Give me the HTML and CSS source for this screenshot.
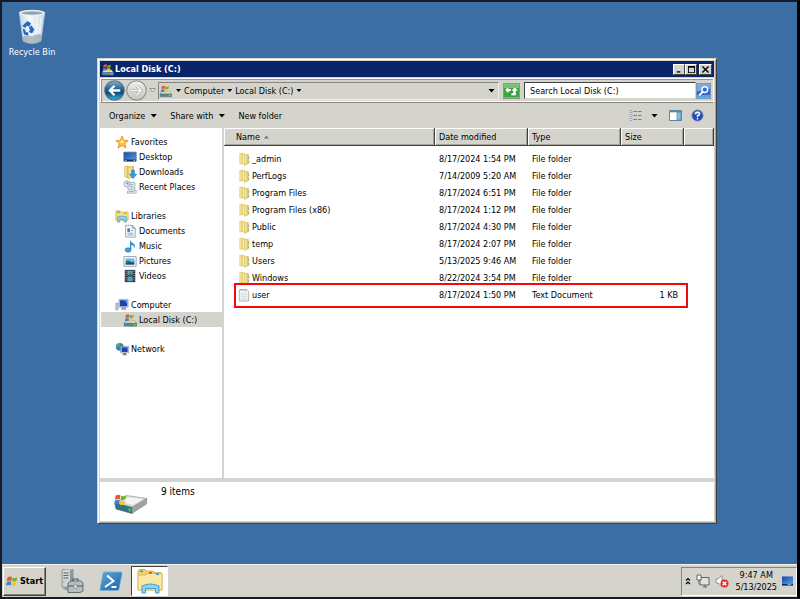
FILE: index.html
```html
<!DOCTYPE html>
<html lang="en">
<head>
<meta charset="utf-8">
<title>Local Disk (C:)</title>
<link rel="stylesheet" href="styles.css">
</head>
<body>
<svg class="sprite" aria-hidden="true">
  <defs>
    <linearGradient id="gold" x1="0" x2="1"><stop offset="0" stop-color="#fcf3b4"/><stop offset="1" stop-color="#e0c253"/></linearGradient>
    <linearGradient id="blue" x1="0" y1="0" x2="0" y2="1"><stop offset="0" stop-color="#7fb4d6"/><stop offset=".45" stop-color="#1d5f92"/><stop offset=".6" stop-color="#0c4a7c"/><stop offset="1" stop-color="#35b5e0"/></linearGradient>
    <linearGradient id="silver" x1="0" y1="0" x2="0" y2="1"><stop offset="0" stop-color="#f2f2f0"/><stop offset="1" stop-color="#c2c2be"/></linearGradient>
    <linearGradient id="glass" x1="0" x2="1"><stop offset="0" stop-color="#c3d8e8"/><stop offset=".4" stop-color="#f6f9fb"/><stop offset="1" stop-color="#c9d9e5"/></linearGradient>
    <linearGradient id="screen" x1="0" y1="0" x2="1" y2="1"><stop offset="0" stop-color="#1446a8"/><stop offset="1" stop-color="#58a0e4"/></linearGradient>
    <linearGradient id="shell" x1="0" y1="0" x2="1" y2="1"><stop offset="0" stop-color="#5aa7de"/><stop offset="1" stop-color="#1f63a8"/></linearGradient>
  </defs>
  <symbol id="flag" viewBox="0 0 16 16">
    <path fill="#e8552a" d="M2 3.5Q5 1 8 3L7 8Q4 6.500 1 8.500Z"/>
    <path fill="#6fb52c" d="M9 3.500Q12 5 15 2.500L14 7.500Q11 9.500 8 8Z"/>
    <path fill="#3a85dc" d="M1 9.500Q4 7.500 7 9L6 14Q3 12.500 0 14.500Z"/>
    <path fill="#fbc22d" d="M8 9.500Q11 11 14 8.500L13 13.500Q10 15.500 7 14Z"/>
  </symbol>
  <symbol id="drive" viewBox="0 0 16 16">
    <path fill="#e6e9e9" stroke="#83898b" stroke-width=".6" d="M3 8.500H13L15.500 12H1.500Z"/>
    <path fill="#578b93" stroke="#4d6468" stroke-width=".6" d="M1.500 11.500H15.500V15H1.500Z"/>
    <path fill="#79d756" d="M12 12.500h2.500v1.500H12z"/>
    <use href="#flag" x="2" y="0" width="11" height="11"/>
  </symbol>
  <symbol id="folder" viewBox="0 0 14 16">
    <path fill="url(#gold)" stroke="#d8bc5e" stroke-width=".6" d="M2 1.500L5 1 6 2V13.500L2 14Z"/>
    <path fill="#fbf3c2" stroke="#d3b450" stroke-width=".6" d="M5 2.500L8 1.500V14.500L5 13Z"/>
    <path fill="url(#gold)" stroke="#cdac45" stroke-width=".6" d="M7.500 3L12 2.500V13.500L7.500 15.500Z"/>
    <path fill="#68a9c4" d="M12 5h1v3h-1z"/><path fill="#7db66b" d="M12 10h1v3h-1z"/>
  </symbol>
  <symbol id="textfile" viewBox="0 0 14 16">
    <path fill="#f6f9fa" stroke="#8d979c" stroke-width=".8" d="M1.500 2H10.500L12.500 4V15H1.500Z"/>
    <path stroke="#c6d0d5" stroke-width=".8" d="M3 5.500h8M3 7.500h8M3 9.500h8M3 11.500h8M3 13.500h8"/>
    <path stroke="#777f84" stroke-dasharray="1 1" d="M2.500 2h8"/>
  </symbol>
  <symbol id="star" viewBox="0 0 16 16">
    <path fill="#ffc32e" stroke="#dd7d15" stroke-width=".8" d="M8 1L10 6 15 6.500 11.200 9.800 12.600 15 8 12 3.400 15 4.800 9.800 1 6.500 6 6Z"/>
    <path fill="#fff0a0" d="M8 4l1 3.500 2 .5-3 1.500-3-1.500 2-.5z"/>
  </symbol>
  <symbol id="desktop" viewBox="0 0 16 16">
    <path fill="url(#screen)" stroke="#5b6f91" d="M1 2.500H15V12.500H1Z"/><path fill="#173152" d="M1 11h14v2H1z"/><path fill="#6ec1e8" d="M2 11.500h2v1H2zM12 11.500h2v1h-2z"/>
  </symbol>
  <symbol id="downloads" viewBox="0 0 16 16">
    <path fill="url(#gold)" stroke="#c9a63c" stroke-width=".7" d="M2 1.500L6 1V14.500L2 13.500Z"/><path fill="url(#gold)" stroke="#c9a63c" stroke-width=".7" d="M6 2.500L12 1.500V14L6 15.500Z"/>
    <path fill="#2f9be6" stroke="#1567ac" stroke-width=".6" d="M10 6H13V10.500H15.500L11.500 15.500 7.500 10.500H10Z"/>
  </symbol>
  <symbol id="recent" viewBox="0 0 16 16">
    <path fill="#edf3f6" stroke="#8997a0" stroke-width=".8" d="M5 3H13.500V12H15V15H4.500L6 12Z"/><path stroke="#6f9fbd" d="M8 5.500h4M8 8h4M7 10.500h5M7 13h6"/>
    <circle cx="4.500" cy="4.500" r="3.500" fill="#dcebf3" stroke="#8795a0" stroke-width=".8"/><path fill="none" stroke="#446" stroke-width=".8" d="M4.500 2.500v2h2"/>
  </symbol>
  <symbol id="libraries" viewBox="0 0 16 16">
    <path fill="#f5df84" stroke="#cfa837" stroke-width=".7" d="M1 2H6L7 3.500H15V13H1Z"/><path fill="#4fae62" d="M2.500 3h3v1.500h-3z"/><path fill="#e46b52" d="M10 4.500h3v1h-3z"/>
    <path fill="#8ed1f2" stroke="#3f9ccb" stroke-width=".7" d="M3 9Q8 7 13 9V15H10.500V12H5.500V15H3Z"/>
  </symbol>
  <symbol id="documents" viewBox="0 0 16 16">
    <path fill="#f8fafb" stroke="#7d8991" stroke-width=".8" d="M3 1.500H10.500L14 5V15H3Z"/><path fill="#d5dfe5" stroke="#7d8991" stroke-width=".7" d="M10.500 1.500V5H14Z"/><path fill="#3f79b8" d="M5 5h3v4H5z"/><path stroke="#7aa0b8" d="M9 7.500h3M5 10.500h7M5 12.500h7"/>
  </symbol>
  <symbol id="music" viewBox="0 0 16 16">
    <path fill="#2f8fd2" d="M8 1Q9 4 12 5 15 7 12.500 11 13 7 9.500 6.500V12H8Z"/><ellipse cx="5.800" cy="12.500" rx="3.400" ry="2.500" fill="#3aa0e3" stroke="#1c6aa8" stroke-width=".6"/>
  </symbol>
  <symbol id="pictures" viewBox="0 0 16 16">
    <path fill="#fff" stroke="#89969e" d="M1 3H15V14H1Z"/><path fill="#74bbe3" d="M3 5h10v4H3z"/><path fill="#277b81" d="M3 8l3-1 4 2 3-1v4H3z"/><path fill="#1d4b78" d="M3 10.500l5-1 5 1V12H3z"/>
  </symbol>
  <symbol id="videos" viewBox="0 0 16 16">
    <path fill="#293743" d="M2 1H14V15H2Z"/><path fill="#53a5be" d="M5 2h6v5H5zM5 8.500h6v5.500H5z"/><path fill="#a8543c" d="M7 4h3v3H7z"/><path stroke="#dbe3e7" stroke-dasharray="1 1.500" d="M3.500 2v12M12.500 2v12"/>
  </symbol>
  <symbol id="computer" viewBox="0 0 16 16">
    <path fill="#c8ced2" stroke="#7b868d" stroke-width=".7" d="M1 6H3.500V13.500H1Z"/><path fill="#dfe3e6" stroke="#8b959b" stroke-width=".7" d="M4.500 1.500H15V10.500H4.500Z"/><path fill="#1b3fb6" d="M5.500 2.500h8.500v7H5.500z"/><path fill="#5d92ec" d="M10 2.500h4v4z"/><path fill="#939da3" d="M8 10.500h4l1 3H7z"/>
  </symbol>
  <symbol id="network" viewBox="0 0 16 16">
    <circle cx="5.500" cy="5.500" r="4.500" fill="#2b83cb"/><path fill="#55b84a" d="M2 3q3-3 4-1l-1 3-3 1zM5 7l3 1-2 2z"/><path fill="#e2e7ea" stroke="#7a8790" stroke-width=".7" d="M6.500 5H15.500V12.500H6.500Z"/><path fill="#1c45bd" d="M7.500 6h7v5.500h-7z"/><path fill="#6f7e8a" d="M9.500 12.500h3l1 2.500h-5z"/>
  </symbol>
</svg>

<main class="desktop">
  <a class="shortcut" href="#bin">
    <svg class="bin" viewBox="0 0 32 38" aria-hidden="true">
      <path fill="url(#glass)" stroke="#b6c8d4" stroke-width=".8" d="M2.500 4L6.500 34Q16 39 25.500 34L29.500 4Z"/>
      <path fill="#8c979c" d="M6 30Q10 26 16 29 23 25 26.500 28L25.500 34Q16 39 6.500 34Z" opacity=".6"/>
      <ellipse cx="16" cy="4" rx="13.500" ry="2.800" fill="#cbd5da" stroke="#eef4f7"/>
      <ellipse cx="16" cy="4.200" rx="11" ry="1.500" fill="#8fa1ac"/>
      <path fill="#2568cb" d="M7.500 16L11 12.500 15 15 13 19 10.500 17.500 9 20 5.500 18ZM15.500 17L18.500 22 16 26 12.500 24 14 22 12.500 20ZM6 20.500L9 22 9 24.500H12V28L7.500 27Z"/>
      <path stroke="#fff" stroke-width="1.500" opacity=".6" d="M22 8L21 27M25.500 9L24 26"/>
    </svg>
    <span>Recycle Bin</span>
  </a>

  <section class="window">
    <header class="titlebar">
      <svg class="ico" aria-hidden="true"><use href="#drive"/></svg>
      <h1>Local Disk (C:)</h1>
      <button class="sys" aria-label="Minimize"><svg viewBox="0 0 10 8"><path d="M2 6h4v1.500H2z"/></svg></button>
      <button class="sys" aria-label="Maximize"><svg viewBox="0 0 10 8"><path fill-rule="evenodd" d="M1 0h8v8H1zM2 2v5h6V2z"/></svg></button>
      <button class="sys close" aria-label="Close"><svg viewBox="0 0 10 8"><path fill="none" stroke="#000" stroke-width="1.500" d="M1.500.5l7 7M8.500.5l-7 7"/></svg></button>
    </header>

    <nav class="addressbar" aria-label="Address">
      <button class="round" aria-label="Back"><svg viewBox="0 0 20 20"><circle cx="10" cy="10" r="9.300" fill="url(#blue)" stroke="#56707f"/><path fill="none" stroke="#fff" stroke-width="2.200" d="M15.500 10H6M10 5.500L5.500 10 10 14.500"/></svg></button>
      <button class="round" aria-label="Forward"><svg viewBox="0 0 20 20"><circle cx="10" cy="10" r="9.300" fill="url(#silver)" stroke="#8b8d8b"/><path fill="none" stroke="#b0b0ad" stroke-width="3" d="M4.500 10H14M10 5.500L14.500 10 10 14.500"/><path fill="none" stroke="#f5f5f3" stroke-width="1.600" d="M4.500 10H14M10 5.500L14.500 10 10 14.500"/></svg></button>
      <button class="recent" aria-label="Recent pages"><svg viewBox="0 0 7 5"><path fill="#f4f4f1" stroke="#8c8f94" d="M.8.500h5.400L3.500 4z"/></svg></button>
      <div class="path">
        <svg class="ico" aria-hidden="true"><use href="#drive"/></svg>
        <i class="arrow"></i>
        <button>Computer</button><i class="arrow"></i>
        <button>Local Disk (C:)</button><i class="arrow"></i>
        <button class="drop" aria-label="Previous locations"><i class="arrow wide"></i></button>
      </div>
      <button class="refresh" aria-label="Refresh"><svg viewBox="0 0 16 14"><path fill="#34ac35" d="M0 0h16v14H0z"/><path fill="#9bdc91" d="M0 0h16v4H0z" opacity=".6"/><path fill="#fff" stroke="#167020" stroke-width=".5" d="M1 6L5 1.500V4.500H8V7.500H5V10.500ZM7.500 9H9.500V7H7.500L11.500 2.500 15.500 7H13V12H7.500Z"/></svg></button>
      <input class="search" type="text" aria-label="Search Local Disk (C:)" placeholder="Search Local Disk (C:)">
      <button class="go" aria-label="Search"><svg viewBox="0 0 15 15"><path fill="#2b68cf" d="M0 0h15v15H0z"/><path fill="#91c4f5" d="M0 0h15v5L0 8z" opacity=".7"/><path fill="#56d2f5" d="M0 12h15v3H0z" opacity=".6"/><circle cx="9" cy="6" r="3.300" fill="#2f6cd0" stroke="#fff" stroke-width="1.700"/><path stroke="#fff" stroke-width="2.200" d="M6.500 8.500L2.500 12.500"/></svg></button>
    </nav>

    <div class="commands" role="toolbar">
      <button>Organize<i class="arrow wide"></i></button>
      <button>Share with<i class="arrow wide"></i></button>
      <button>New folder</button>
      <span class="spacer"></span>
      <button class="views" aria-label="Change view"><svg viewBox="0 0 12 11"><path fill="#fff" stroke="#8ba0b8" stroke-width=".8" d="M.5.500h2v2h-2zM.5 4.500h2v2h-2zM.5 8.500h2v2h-2z"/><path stroke="#747d86" stroke-dasharray="3.500 1" d="M4 1.500h8M4 5.500h8M4 9.500h8"/></svg><i class="arrow wide"></i></button>
      <button class="pane" aria-label="Preview pane"><svg viewBox="0 0 13 11"><path fill="#fff" stroke="#5a87a8" d="M.5.500h12v10H.5z"/><path fill="#5a87a8" d="M1 1h11v1.300H1z"/><path fill="#7ec0e2" stroke="#4b87aa" stroke-width=".7" d="M8 2.500h4v7.500H8z"/></svg></button>
      <button class="help" aria-label="Help"><svg viewBox="0 0 14 14"><circle cx="7" cy="7" r="6.200" fill="#2449b4" stroke="#a1a9ba"/><path fill="#6d91e2" d="M2 5Q7-1 12 5 7 8 2 5" opacity=".6"/><path fill="none" stroke="#fff" stroke-width="1.500" d="M4.800 5.500Q5 3.500 7 3.500T9.200 5.500Q9 6.800 7 7.500V8.800M7 9.800v1.500"/></svg></button>
    </div>

    <div class="body">
      <nav class="tree" aria-label="Folders">
        <ul>
          <li><a href="#fav"><svg class="ico"><use href="#star"/></svg>Favorites</a></li>
          <li class="sub"><a href="#a"><svg class="ico"><use href="#desktop"/></svg>Desktop</a></li>
          <li class="sub"><a href="#b"><svg class="ico"><use href="#downloads"/></svg>Downloads</a></li>
          <li class="sub"><a href="#c"><svg class="ico"><use href="#recent"/></svg>Recent Places</a></li>
        </ul>
        <ul>
          <li><a href="#lib"><svg class="ico"><use href="#libraries"/></svg>Libraries</a></li>
          <li class="sub"><a href="#d"><svg class="ico"><use href="#documents"/></svg>Documents</a></li>
          <li class="sub"><a href="#e"><svg class="ico"><use href="#music"/></svg>Music</a></li>
          <li class="sub"><a href="#f"><svg class="ico"><use href="#pictures"/></svg>Pictures</a></li>
          <li class="sub"><a href="#g"><svg class="ico"><use href="#videos"/></svg>Videos</a></li>
        </ul>
        <ul>
          <li><a href="#pc"><svg class="ico"><use href="#computer"/></svg>Computer</a></li>
          <li class="sub current"><a href="#h"><svg class="ico"><use href="#drive"/></svg>Local Disk (C:)</a></li>
        </ul>
        <ul>
          <li><a href="#net"><svg class="ico"><use href="#network"/></svg>Network</a></li>
        </ul>
      </nav>

      <div class="list">
        <table>
          <colgroup><col class="c-name"><col class="c-date"><col class="c-type"><col class="c-size"><col></colgroup>
          <thead><tr><th>Name<i class="sort"></i></th><th>Date modified</th><th>Type</th><th>Size</th><th aria-label="Other"></th></tr></thead>
          <tbody>
            <tr><td><svg class="file"><use href="#folder"/></svg>_admin</td><td>8/17/2024 1:54 PM</td><td>File folder</td><td></td><td></td></tr>
            <tr><td><svg class="file"><use href="#folder"/></svg>PerfLogs</td><td>7/14/2009 5:20 AM</td><td>File folder</td><td></td><td></td></tr>
            <tr><td><svg class="file"><use href="#folder"/></svg>Program Files</td><td>8/17/2024 6:51 PM</td><td>File folder</td><td></td><td></td></tr>
            <tr><td><svg class="file"><use href="#folder"/></svg>Program Files (x86)</td><td>8/17/2024 1:12 PM</td><td>File folder</td><td></td><td></td></tr>
            <tr><td><svg class="file"><use href="#folder"/></svg>Public</td><td>8/17/2024 4:30 PM</td><td>File folder</td><td></td><td></td></tr>
            <tr><td><svg class="file"><use href="#folder"/></svg>temp</td><td>8/17/2024 2:07 PM</td><td>File folder</td><td></td><td></td></tr>
            <tr><td><svg class="file"><use href="#folder"/></svg>Users</td><td>5/13/2025 9:46 AM</td><td>File folder</td><td></td><td></td></tr>
            <tr><td><svg class="file"><use href="#folder"/></svg>Windows</td><td>8/22/2024 3:54 PM</td><td>File folder</td><td></td><td></td></tr>
            <tr class="marked"><td><svg class="file"><use href="#textfile"/></svg>user</td><td>8/17/2024 1:50 PM</td><td>Text Document</td><td>1 KB</td><td></td></tr>
          </tbody>
        </table>
      </div>
    </div>

    <footer class="details">
      <svg viewBox="0 0 36 22" aria-hidden="true">
        <path fill="#d3d6d6" stroke="#969b9b" stroke-width=".6" d="M2 10L14 2.500 34 5.500 19 14.500Z"/>
        <path fill="#f3f4f4" d="M8 9L15 4 30 6 20 12Z"/>
        <path fill="#2f7680" stroke="#47575a" stroke-width=".6" d="M2 10L19 14.500V20.500L3 16Z"/>
        <path fill="#9ea2a2" stroke="#7e8484" stroke-width=".5" d="M19 14.500L34 5.500 33.500 11 19 20.500Z"/><path fill="#49d544" d="M15.500 15l2 .6v3l-2-.6z"/>
        <use href="#flag" x="1" y="0" width="13" height="13"/>
      </svg>
      <p>9 items</p>
    </footer>
  </section>
</main>

<footer class="taskbar">
  <button class="start"><svg viewBox="0 0 16 16"><use href="#flag"/></svg>Start</button>
  <button class="task" aria-label="Server Manager"><svg viewBox="0 0 24 24">
    <path fill="#d2d5d6" stroke="#72797d" stroke-width=".7" d="M2 1L5 0H13V17L10 18H2Z"/><path fill="#8f979b" d="M10 1.500L13 0V17L10 18Z"/><path stroke="#60686c" d="M3.500 4h5M3.500 6.500h5M3.500 9h5"/><path fill="#69cf65" d="M3 12h1.500v1.500H3z"/>
    <path fill="#b7bec2" stroke="#525a60" stroke-width=".8" d="M8 14L11 12H21L23 14V22L20 23.500H8Z"/><path fill="none" stroke="#525a60" stroke-width="1.200" d="M13 12V10H18V12M8 17h15"/><path fill="#f7f7f7" stroke="#525a60" stroke-width=".5" d="M14 16h3v3h-3z"/><path fill="#8c969b" d="M2 19l6-1v4z"/>
  </svg></button>
  <button class="task" aria-label="PowerShell"><svg viewBox="0 0 24 24"><path fill="url(#shell)" stroke="#7fa9cb" stroke-width=".8" d="M5 3H22Q23.500 3 23 4.500L20 20Q19.700 21.500 18 21.500H2Q.5 21.500 1 20L4 4.500Q4.200 3 5 3Z"/><path fill="none" stroke="#fff" stroke-width="2" d="M8 6.500L14.500 12 6 18M12.500 18H17.500"/></svg></button>
  <button class="task active" aria-label="Windows Explorer"><svg viewBox="0 0 28 26">
    <path fill="#efd474" stroke="#c49e36" stroke-width=".7" d="M2 3L3 1.500H9L10 3H17L18 4.500H25L26 6V22H2Z"/><path fill="#f8e9a2" stroke="#d1ad48" stroke-width=".7" d="M2 7H10L11 5.500H26V22H2Z"/><path fill="#3faf4d" d="M4 2.500h3V4H4z"/><path fill="#db4938" d="M13 4h3v1.500h-3z"/><path fill="#3e8fd8" d="M20 5.500h3V7h-3z"/>
    <path fill="#8cd2f2" stroke="#479fcb" d="M6 18Q14 14 23 18V25H19.500V20.500H9.500V25H6Z"/>
  </svg></button>
  <div class="tray">
    <button aria-label="Show hidden icons"><svg class="chev" viewBox="0 0 6 8"><path fill="none" stroke="#000" stroke-width="1.200" d="M1 3.500L3 1.500 5 3.500M1 7L3 5 5 7"/></svg></button>
    <svg class="tico" viewBox="0 0 14 14"><path fill="#e1e2df" stroke="#5e6265" d="M4 3.500H13V11H4Z"/><path fill="#fff" stroke="#5e6265" d="M1 1H5V6H1ZM3 6V10H4M7 13H11M9 11V13"/></svg>
    <svg class="tico" viewBox="0 0 14 14"><path fill="#fafafa" stroke="#7c8084" stroke-width=".8" d="M1 5H3L7 1.500V12L3 9H1Z"/><circle cx="9.500" cy="9.500" r="4" fill="#df2f2b"/><path stroke="#fff" stroke-width="1.400" d="M7.700 7.700l3.600 3.600M11.300 7.700L7.700 11.300"/></svg>
    <time class="clock" datetime="2025-05-13T09:47"><span>9:47 AM</span><span>5/13/2025</span></time>
    <button aria-label="Show desktop"><svg class="show" viewBox="0 0 12 11"><path fill="url(#screen)" d="M0 0h12v8H0z"/><path fill="#102c5b" d="M0 8h12v2H0z"/><path fill="#53b7ee" d="M6 8h4v1.500H6z"/></svg></button>
  </div>
</footer>
</body>
</html>
```

FILE: styles.css
```css
* { box-sizing: border-box; }

body {
  margin: 0;
  height: 100vh;
  display: flex;
  flex-direction: column;
  border: 2px solid #161b26;
  border-right: 3px solid #000;
  background: #3a6ea5;
  color: #000;
  font: 9px/12px Tahoma, "DejaVu Sans Condensed", "DejaVu Sans", sans-serif;
  overflow: hidden;
}

button, input { font: inherit; color: inherit; margin: 0; padding: 0; border: 0; background: none; }
button { display: flex; align-items: center; white-space: nowrap; }
a { color: inherit; text-decoration: none; }
svg { display: block; flex: none; }
.sprite { position: absolute; width: 0; height: 0; }
.ico { width: 14px; height: 14px; }

.arrow { flex: none; width: 5px; height: 3px; background: #000; clip-path: polygon(0 0, 100% 0, 50% 100%); }
.arrow.wide { width: 7px; height: 4px; }

/* Desktop */
.desktop { flex: 1; position: relative; min-height: 0; }
.shortcut { position: absolute; left: 5px; top: 6px; width: 50px; display: flex; flex-direction: column; align-items: center; color: #fff; white-space: nowrap; }
.bin { width: 30px; height: 38px; }

/* Window */
.window {
  position: absolute;
  inset: 56px 80px 40px 95px;
  display: flex;
  flex-direction: column;
  padding: 1px;
  border: 1px solid #d5d4cc;
  border-right-color: #404040;
  border-bottom-color: #404040;
  background: #d5d4cc;
  box-shadow: inset 1px 1px #fff, inset -1px -1px #a8a79f;
}
.titlebar { display: flex; align-items: center; height: 16px; margin: 1px 1px 0; padding: 0 2px 0 1px; background: #0a246a; color: #fff; }
.titlebar h1 { flex: 1; margin: 0; font-size: 9px; line-height: 16px; padding-left: 1px; }
.titlebar .ico { width: 13px; height: 13px; }
.sys { justify-content: center; width: 12px; height: 11px; background: #d5d4cc; border: 1px solid; border-color: #fff #404040 #404040 #fff; }
.sys svg { width: 9px; height: 7px; }
.sys.close { margin-left: 2px; width: 13px; }

.addressbar { display: flex; align-items: center; height: 25px; margin: 1px 1px 0; padding: 0 2px; border: 1px solid #fff; border-bottom-color: #85847e; box-shadow: inset 1px 1px #94938c, inset 0 -1px #fff; }
.round { margin-left: 1px; }
.round svg { width: 21px; height: 21px; }
.recent { width: 11px; justify-content: center; }
.recent svg { width: 7px; height: 5px; }
.path { flex: 1; display: flex; align-items: center; gap: 3px; height: 18px; padding-right: 3px; border: 1px solid; border-color: #85847e #eee #eee #85847e; }
.path .ico { width: 13px; margin-right: 1px; }
.drop { margin-left: auto; height: 16px; }
.refresh { width: 17px; height: 16px; margin: 0 4px; border: 1px solid #8f978c; }
.refresh svg { width: 15px; height: 14px; }
.search { width: 172px; height: 17px; padding: 0 5px; background: #fff; border: 1px solid; border-color: #404040 #d5d4cc #d5d4cc #404040; }
.search::placeholder { color: #000; opacity: 1; }
.go { width: 15px; height: 16px; border: 1px solid #7f93b5; }
.go svg { width: 13px; height: 14px; }

.commands { display: flex; align-items: center; gap: 13px; height: 25px; padding: 0 11px 0 10px; }
.commands .arrow { margin-left: 5px; }
.spacer { flex: 1; }
.views svg { width: 13px; height: 11px; }
.commands .views .arrow { margin-left: 9px; }
.pane { margin-left: -2px; }
.pane svg { width: 13px; height: 11px; }
.help { margin-left: -4px; }
.help svg { width: 13px; height: 13px; }

.body { flex: 1; display: flex; min-height: 0; margin: 0 1px; background: #fff; }
.tree { flex: none; width: 124px; padding: 6px 0 0 1px; border-right: 2px solid #d5d4cc; }
.tree ul { margin: 0 0 14px; padding: 0; list-style: none; }
.tree a { display: flex; align-items: center; gap: 2px; height: 15px; padding-left: 14px; white-space: nowrap; }
.tree .sub a { padding-left: 22px; }
.tree .current { background: #d5d4cc; }

.list { flex: 1; min-width: 0; }
table { width: 100%; table-layout: fixed; border-collapse: separate; border-spacing: 0; }
.c-name { width: 211px; }
.c-date, .c-type { width: 93px; }
.c-size { width: 63px; }
th { height: 18px; padding: 0 4px; background: #d5d4cc; font-weight: normal; text-align: left; white-space: nowrap; border: solid #404040; border-width: 0 1px 1px 0; box-shadow: inset 1px 1px #fff, inset -1px -1px #a3a29b; }
th:first-child { padding-left: 12px; }
tbody::before { content: ""; display: block; height: 4px; }
td { height: 17px; padding: 0 4px; white-space: nowrap; }
td:first-child { padding-left: 14px; }
td:nth-child(4) { padding-right: 6px; text-align: right; }
.file { display: inline-block; width: 12px; height: 14px; margin-right: 2px; vertical-align: middle; }
.sort { display: inline-block; width: 5px; height: 3px; margin-left: 4px; background: #77766f; vertical-align: middle; clip-path: polygon(50% 0, 100% 100%, 0 100%); }
.marked { position: relative; }
.marked td:first-child::after { content: ""; position: absolute; inset: -3px 26px -5px 10px; border: 2px solid #f40808; }

.details { display: flex; gap: 12px; height: 43px; margin: 0 1px 1px; padding: 4px 13px; background: #fff; border-top: 4px solid #d5d4cc; }
.details svg { width: 36px; height: 22px; margin-top: 7px; }
.details p { margin: 0; font-size: 10px; }

/* Taskbar */
.taskbar { display: flex; align-items: center; height: 33px; padding: 1px 0 1px 1px; background: #d5d4cc; border-top: 1px solid #f0efea; }
.start { gap: 2px; height: 29px; padding: 0 2px; font-weight: bold; border: 1px solid; border-color: #fff #404040 #404040 #fff; box-shadow: inset -1px -1px #85847e; }
.start svg { width: 12px; height: 12px; }
.task { justify-content: center; width: 37px; height: 30px; margin-left: 2px; border: 1px solid transparent; }
.start + .task { margin-left: 7px; }
.task svg { width: 24px; height: 24px; }
.task.active { background: #fff; border-color: #404040 #fff #fff #404040; }
.task.active svg { width: 28px; height: 26px; }
.tray { display: flex; align-items: center; gap: 5px; height: 29px; margin-left: auto; padding: 0 3px; border: 1px solid; border-color: #85847e #fff #fff #85847e; }
.chev { width: 6px; height: 8px; }
.tico { width: 14px; height: 14px; }
.clock { display: flex; flex-direction: column; align-items: center; margin-left: 1px; }
.show { width: 11px; height: 11px; }
```
